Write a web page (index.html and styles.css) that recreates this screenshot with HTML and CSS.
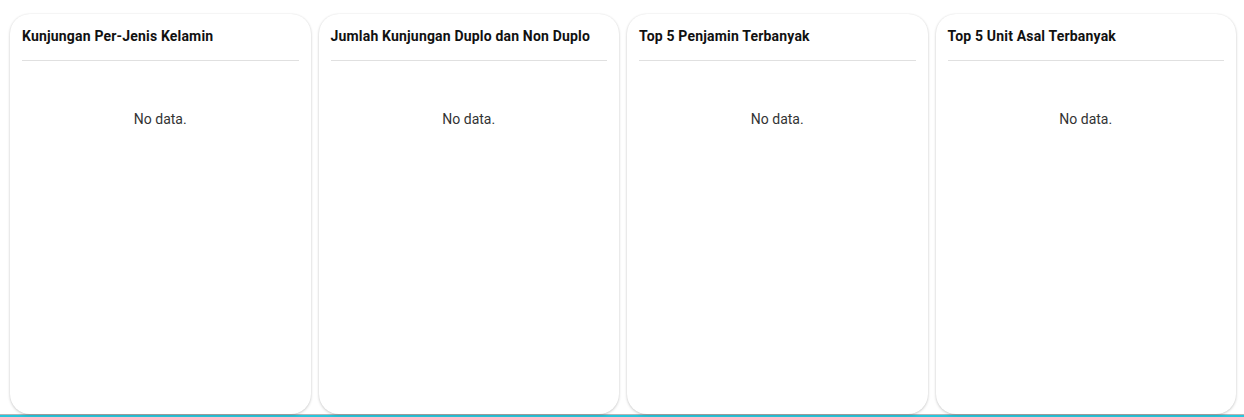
FILE: index.html
```html
<!DOCTYPE html>
<html>
<head>
<meta charset="utf-8">
<link rel="stylesheet" href="styles.css">
</head>
<body>
<div class="wrap">
  <div class="grid">
    <div class="card">
      <div class="card-title">Kunjungan Per-Jenis Kelamin</div>
      <div class="card-body"><div class="empty">No data.</div></div>
    </div>
    <div class="card">
      <div class="card-title">Jumlah Kunjungan Duplo dan Non Duplo</div>
      <div class="card-body"><div class="empty">No data.</div></div>
    </div>
    <div class="card">
      <div class="card-title">Top 5 Penjamin Terbanyak</div>
      <div class="card-body"><div class="empty">No data.</div></div>
    </div>
    <div class="card">
      <div class="card-title">Top 5 Unit Asal Terbanyak</div>
      <div class="card-body"><div class="empty">No data.</div></div>
    </div>
  </div>
</div>
</body>
</html>
```
FILE: styles.css
```css
html, body {
  margin: 0;
  padding: 0;
  background: #fff;
  font-family: Roboto, "Liberation Sans", sans-serif;
}
.wrap {
  height: 417px;
  box-sizing: border-box;
  border-bottom: 2px solid #29c6dc;
}
.grid {
  display: grid;
  grid-template-columns: repeat(4, 1fr);
  gap: 8px;
  padding: 14px 8px 0 10px;
  height: 415px;
  box-sizing: border-box;
  border-bottom: 1px solid #b5b5b5;
}
.card {
  background: #fff;
  border-radius: 20px;
  height: 400px;
  box-sizing: border-box;
  padding: 12px 12px;
  box-shadow: 0 1px 3px rgba(0,0,0,0.2), 0 0 2px rgba(0,0,0,0.06);
}
.card-title {
  font-size: 14px;
  font-weight: 700;
  line-height: 20px;
  letter-spacing: 0.18px;
  color: #111;
  padding-bottom: 14px;
  border-bottom: 1px solid #e0e0e0;
  white-space: nowrap;
}
.card-body {
  padding-top: 48px;
}
.empty {
  text-align: center;
  font-size: 14px;
  line-height: 20px;
  color: #333;
}
```
